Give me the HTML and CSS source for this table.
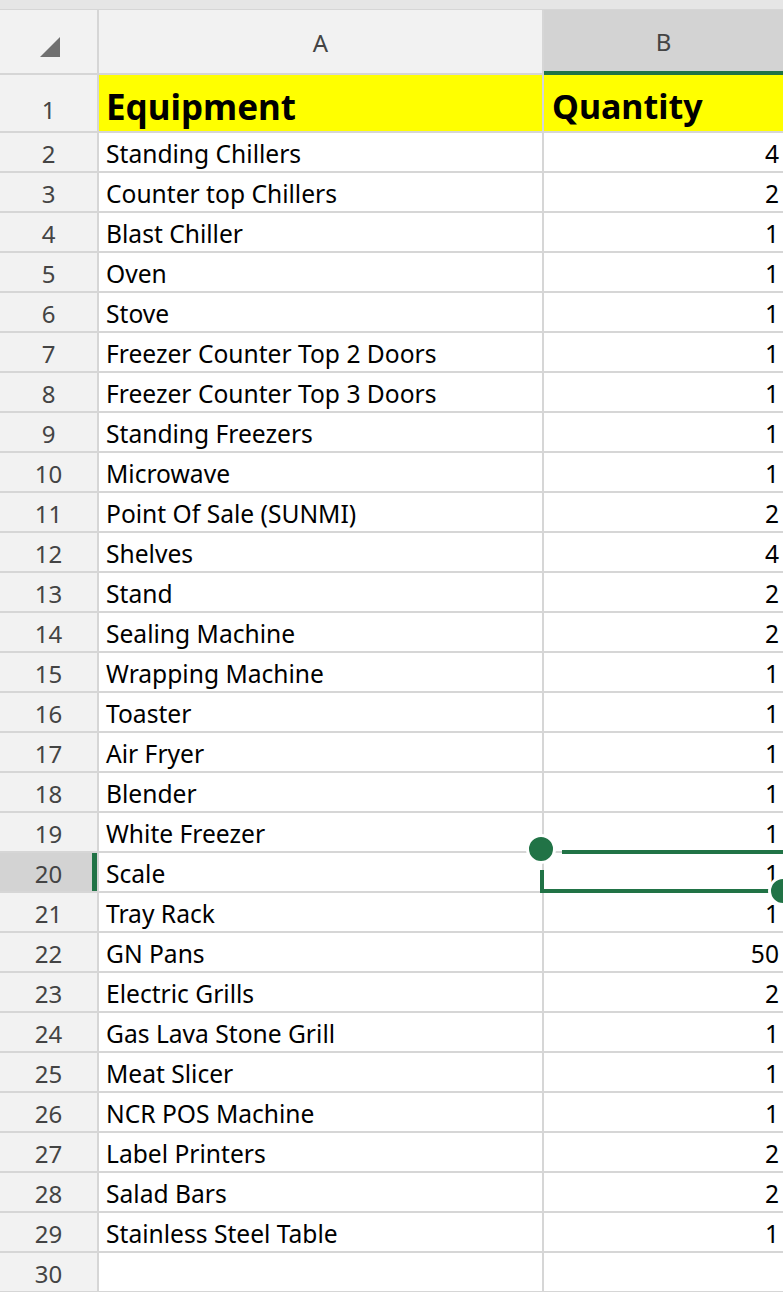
FILE: index.html
```html
<!DOCTYPE html>
<html>
<head>
<meta charset="utf-8">
<link rel="stylesheet" href="styles.css">
</head>
<body>
<div class="topstrip"></div>
<div class="sheet">
  <div class="grid">
    <div class="corner"><svg width="22" height="22" viewBox="0 0 22 22"><polygon points="21,1 21,21 1,21" fill="#707070"/></svg></div>
    <div class="colhead">A</div>
    <div class="colhead sel">B</div>

    <div class="rownum r1">1</div>
    <div class="cell hdr r1">Equipment</div>
    <div class="cell hdr r1">Quantity</div>

    <div class="rownum">2</div><div class="cell">Standing Chillers</div><div class="cell num">4</div>
    <div class="rownum">3</div><div class="cell">Counter top Chillers</div><div class="cell num">2</div>
    <div class="rownum">4</div><div class="cell">Blast Chiller</div><div class="cell num">1</div>
    <div class="rownum">5</div><div class="cell">Oven</div><div class="cell num">1</div>
    <div class="rownum">6</div><div class="cell">Stove</div><div class="cell num">1</div>
    <div class="rownum">7</div><div class="cell">Freezer Counter Top 2 Doors</div><div class="cell num">1</div>
    <div class="rownum">8</div><div class="cell">Freezer Counter Top 3 Doors</div><div class="cell num">1</div>
    <div class="rownum">9</div><div class="cell">Standing Freezers</div><div class="cell num">1</div>
    <div class="rownum">10</div><div class="cell">Microwave</div><div class="cell num">1</div>
    <div class="rownum">11</div><div class="cell">Point Of Sale (SUNMI)</div><div class="cell num">2</div>
    <div class="rownum">12</div><div class="cell">Shelves</div><div class="cell num">4</div>
    <div class="rownum">13</div><div class="cell">Stand</div><div class="cell num">2</div>
    <div class="rownum">14</div><div class="cell">Sealing Machine</div><div class="cell num">2</div>
    <div class="rownum">15</div><div class="cell">Wrapping Machine</div><div class="cell num">1</div>
    <div class="rownum">16</div><div class="cell">Toaster</div><div class="cell num">1</div>
    <div class="rownum">17</div><div class="cell">Air Fryer</div><div class="cell num">1</div>
    <div class="rownum">18</div><div class="cell">Blender</div><div class="cell num">1</div>
    <div class="rownum">19</div><div class="cell">White Freezer</div><div class="cell num">1</div>
    <div class="rownum selrow">20</div><div class="cell">Scale</div><div class="cell num selcell">1
      <svg class="selection" width="270" height="70" viewBox="0 0 270 70">
        <line x1="18" y1="6" x2="270" y2="6" stroke="#217346" stroke-width="4"/>
        <line x1="-2" y1="24" x2="-2" y2="45" stroke="#217346" stroke-width="4"/>
        <line x1="-4" y1="45" x2="226" y2="45" stroke="#217346" stroke-width="4"/>
      </svg>
      <span class="handle h1"></span>
      <span class="handle h2"></span>
    </div>
    <div class="rownum">21</div><div class="cell">Tray Rack</div><div class="cell num">1</div>
    <div class="rownum">22</div><div class="cell">GN Pans</div><div class="cell num">50</div>
    <div class="rownum">23</div><div class="cell">Electric Grills</div><div class="cell num">2</div>
    <div class="rownum">24</div><div class="cell">Gas Lava Stone Grill</div><div class="cell num">1</div>
    <div class="rownum">25</div><div class="cell">Meat Slicer</div><div class="cell num">1</div>
    <div class="rownum">26</div><div class="cell">NCR POS Machine</div><div class="cell num">1</div>
    <div class="rownum">27</div><div class="cell">Label Printers</div><div class="cell num">2</div>
    <div class="rownum">28</div><div class="cell">Salad Bars</div><div class="cell num">2</div>
    <div class="rownum">29</div><div class="cell">Stainless Steel Table</div><div class="cell num">1</div>
    <div class="rownum">30</div><div class="cell"></div><div class="cell num"></div>
  </div>
</div>
</body>
</html>
```

FILE: styles.css
```css
html, body {
  margin: 0;
  padding: 0;
  background: #ffffff;
  overflow: hidden;
}
body {
  width: 783px;
  height: 1292px;
  font-family: "Noto Sans", "Open Sans", sans-serif;
}
.topstrip {
  height: 9px;
  background: #e6e6e6;
  border-bottom: 1px solid #d6d6d6;
}
.sheet {
  width: 783px;
  overflow: hidden;
}
.grid {
  display: grid;
  grid-template-columns: 99px 445px 241px;
  grid-auto-rows: 40px;
  grid-template-rows: 65px 58px;
}
.corner, .colhead, .rownum, .cell {
  box-sizing: border-box;
  border-right: 2px solid #d6d6d6;
  border-bottom: 2px solid #d6d6d6;
  display: flex;
  align-items: center;
}
.corner {
  background: #f2f2f2;
  justify-content: flex-start;
  padding-left: 39px;
  padding-top: 10px;
}
.colhead {
  background: #f2f2f2;
  justify-content: center;
  font-size: 24px;
  color: #444444;
  padding-top: 2px;
}
.colhead.sel {
  background: #d3d3d3;
  border-bottom: 4px solid #217346;
}
.rownum {
  background: #f2f2f2;
  justify-content: center;
  font-size: 24px;
  color: #444444;
  padding-top: 2px;
}
.rownum.r1 { padding-top: 12px; }
.rownum.selrow {
  background: #d3d3d3;
  box-shadow: inset -5px 0 0 #217346;
}
.cell {
  font-size: 24.6px;
  color: #000000;
  padding-left: 7px;
  padding-top: 2px;
  white-space: nowrap;
}
.cell.hdr {
  background: #ffff00;
  font-size: 35px;
  font-weight: 700;
  padding-left: 7px;
  padding-top: 6px;
}
.cell.hdr + .cell.hdr {
  padding-left: 8px;
  font-size: 34px;
}
.cell.num {
  justify-content: flex-end;
  padding-right: 4px;
  padding-left: 0;
}
.selcell {
  position: relative;
  overflow: visible;
}
.selection {
  position: absolute;
  left: 0;
  top: -7px;
  overflow: visible;
}
.handle {
  position: absolute;
  width: 24px;
  height: 24px;
  border-radius: 50%;
  background: #217346;
  border: 3px solid #ffffff;
  box-sizing: content-box;
}
.h1 { left: -18px; top: -19px; }
.h2 { left: 224px; top: 23px; }
```
